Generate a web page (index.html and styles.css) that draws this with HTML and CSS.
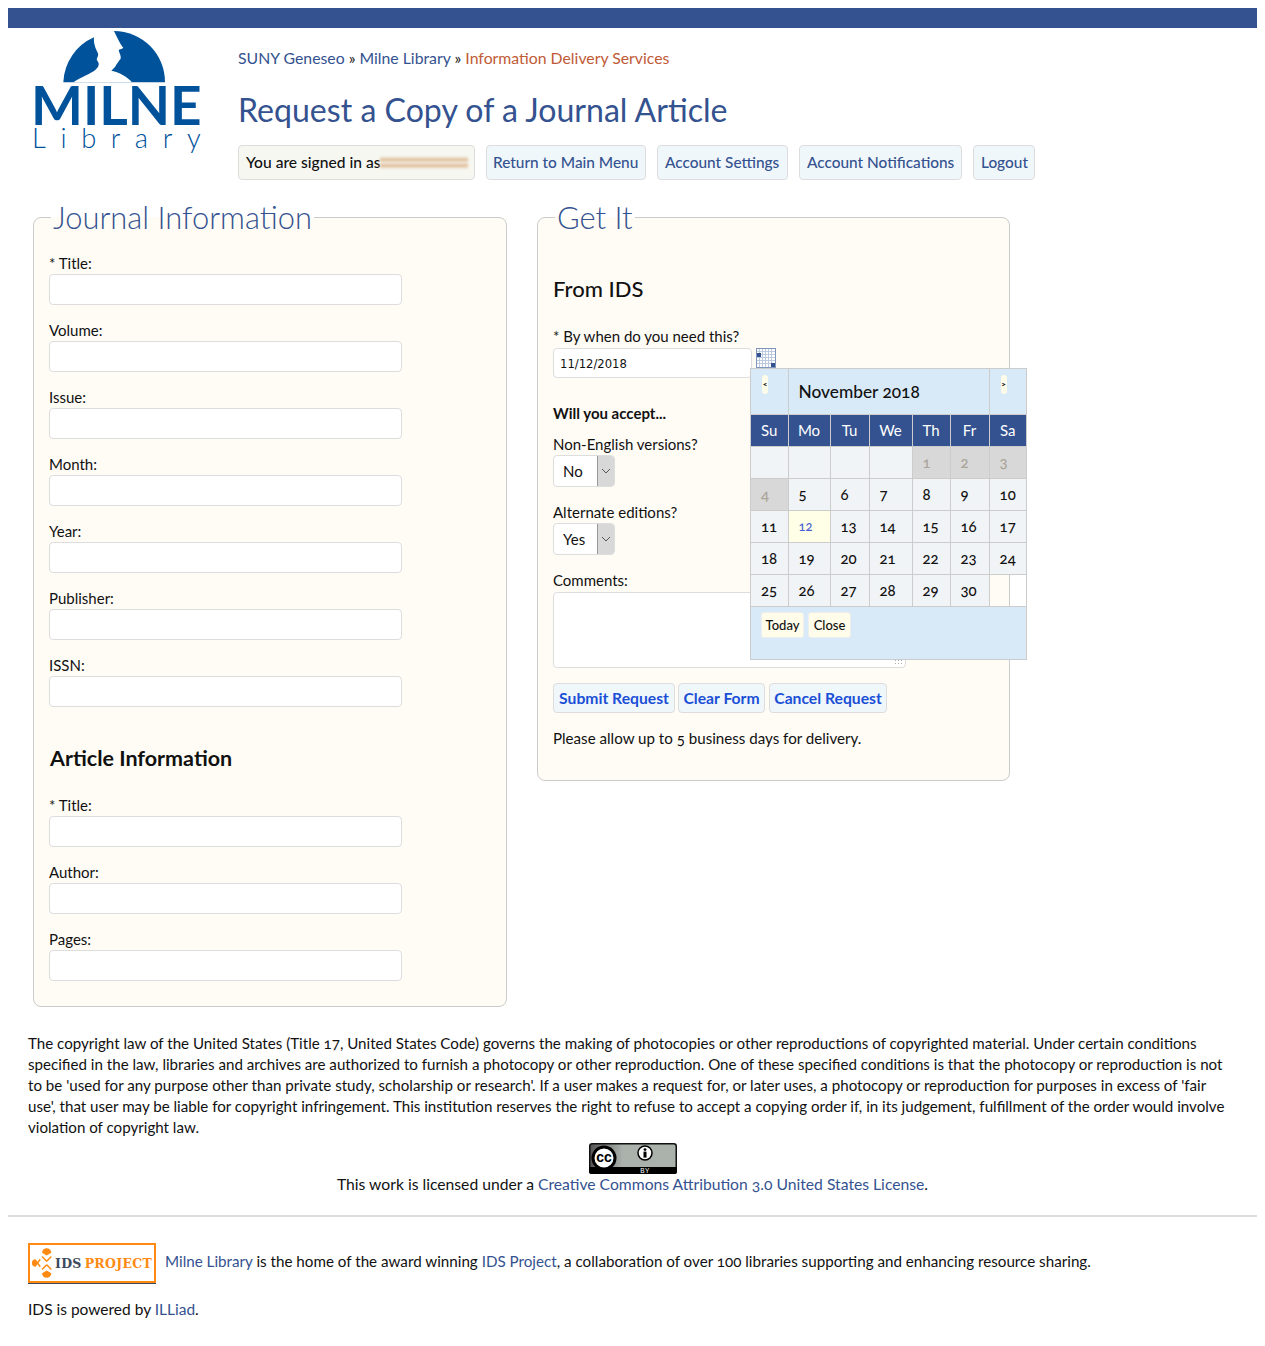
FILE: index.html
```html
<!DOCTYPE html>
<html lang="en">
<head>
<meta charset="utf-8">
<title>Request a Copy of a Journal Article</title>
<link rel="stylesheet" href="styles.css">
</head>
<body>
<div class="topbar"></div>
<header class="masthead">
  <svg class="logo" viewBox="36 24 510 384" role="img" aria-label="Milne Library">
    <path class="logo-fill" d="M130 187 A153 153 0 0 1 222 52 L282 33 A153 153 0 0 1 435 187 Z"/>
    <path class="logo-cut" d="M222 52 C228 40 262 34 282 33 C290 50 298 68 310 84 C304 88 298 88 296 90 C298 100 304 108 302 116 C296 122 294 128 290 132 C286 142 280 146 274 152 C300 158 322 170 336 187 L160 187 C186 170 210 162 226 150 C236 140 240 132 232 122 C226 116 240 108 232 96 C226 84 220 68 222 52 Z"/>
    <text class="logo-milne" x="33" y="315" textLength="512" lengthAdjust="spacingAndGlyphs">MILNE</text>
    <text class="logo-lib" x="36" y="383" textLength="506" lengthAdjust="spacing">Library</text>
  </svg>
  <div class="headcol">
    <nav class="crumbs"><a href="#">SUNY Geneseo</a> » <a href="#">Milne Library</a> » <a href="#" class="crumb-here">Information Delivery Services</a></nav>
    <h1>Request a Copy of a Journal Article</h1>
    <div class="navrow">
      <span class="pill pill-user">You are signed in as<span class="blur"></span></span>
      <a class="pill pill-return" href="#">Return to Main Menu</a>
      <a class="pill pill-settings" href="#">Account Settings</a>
      <a class="pill pill-notes" href="#">Account Notifications</a>
      <a class="pill pill-logout" href="#">Logout</a>
    </div>
  </div>
</header>

<main class="columns">
  <fieldset class="panel panel-left">
    <legend>Journal Information</legend>
    <div class="field"><label>* Title:</label><input class="wide" type="text"></div>
    <div class="field"><label>Volume:</label><input class="wide" type="text"></div>
    <div class="field"><label>Issue:</label><input class="wide" type="text"></div>
    <div class="field"><label>Month:</label><input class="wide" type="text"></div>
    <div class="field"><label>Year:</label><input class="wide" type="text"></div>
    <div class="field"><label>Publisher:</label><input class="wide" type="text"></div>
    <div class="field"><label>ISSN:</label><input class="wide" type="text"></div>
    <h2 class="article-head">Article Information</h2>
    <div class="field"><label>* Title:</label><input class="wide" type="text"></div>
    <div class="field"><label>Author:</label><input class="wide" type="text"></div>
    <div class="field"><label>Pages:</label><input class="wide" type="text"></div>
  </fieldset>

  <fieldset class="panel panel-right">
    <legend>Get It</legend>
    <h2 class="ids-head">From IDS</h2>
    <div class="field datefield">
      <label>* By when do you need this?</label>
      <div class="dateline">
        <input class="date" type="text" value="11/12/2018">
        <svg class="calicon" viewBox="0 0 20 20" aria-hidden="true">
          <rect x="0.5" y="0.5" width="19" height="19" class="cal-bg"/>
          <path class="cal-grid" d="M0 3.5H20M0 6.5H20M0 9.5H20M0 12.5H20M0 15.5H20M3.5 0V20M6.5 0V20M9.5 0V20M12.5 0V20M15.5 0V20"/>
          <rect x="0.5" y="0.5" width="19" height="19" class="cal-edge"/>
          <rect x="1" y="5" width="4" height="4" class="cal-dot"/>
          <rect x="15" y="15" width="4" height="4" class="cal-dot"/>
        </svg>
      </div>
      <div class="datepicker">
        <table>
          <colgroup><col class="c1"><col class="c2"><col class="c3"><col class="c4"><col class="c5"><col class="c6"><col class="c7"></colgroup>
          <thead>
            <tr class="dp-title">
              <th><button class="dp-arrow" type="button">&lt;</button></th>
              <th colspan="5" class="dp-month">November 2018</th>
              <th><button class="dp-arrow" type="button">&gt;</button></th>
            </tr>
            <tr class="dp-days"><th>Su</th><th>Mo</th><th>Tu</th><th>We</th><th>Th</th><th>Fr</th><th>Sa</th></tr>
          </thead>
          <tbody>
            <tr><td></td><td></td><td></td><td></td><td class="off">1</td><td class="off">2</td><td class="off">3</td></tr>
            <tr><td class="off">4</td><td>5</td><td>6</td><td>7</td><td>8</td><td>9</td><td>10</td></tr>
            <tr><td>11</td><td class="today">12</td><td>13</td><td>14</td><td>15</td><td>16</td><td>17</td></tr>
            <tr><td>18</td><td>19</td><td>20</td><td>21</td><td>22</td><td>23</td><td>24</td></tr>
            <tr><td>25</td><td>26</td><td>27</td><td>28</td><td>29</td><td>30</td><td class="empty"></td></tr>
          </tbody>
        </table>
        <div class="dp-foot"><button type="button">Today</button><button type="button">Close</button></div>
      </div>
    </div>
    <h3 class="accept">Will you accept...</h3>
    <div class="field">
      <label>Non-English versions?</label>
      <div class="selectbox"><span>No</span><i class="arrow"><svg viewBox="0 0 10 6"><path d="M1 1l4 4 4-4"/></svg></i></div>
    </div>
    <div class="field">
      <label>Alternate editions?</label>
      <div class="selectbox"><span>Yes</span><i class="arrow"><svg viewBox="0 0 10 6"><path d="M1 1l4 4 4-4"/></svg></i></div>
    </div>
    <div class="field comments">
      <label>Comments:</label>
      <textarea></textarea>
      <span class="grip"></span>
    </div>
    <div class="actions">
      <button type="button" class="act act-submit">Submit Request</button>
      <button type="button" class="act act-clear">Clear Form</button>
      <button type="button" class="act act-cancel">Cancel Request</button>
    </div>
    <p class="allow">Please allow up to 5 business days for delivery.</p>
  </fieldset>
</main>

<section class="legal">
  <p>The copyright law of the United States (Title 17, United States Code) governs the making of photocopies or other reproductions of copyrighted material. Under certain conditions<br>specified in the law, libraries and archives are authorized to furnish a photocopy or other reproduction. One of these specified conditions is that the photocopy or reproduction is not<br>to be 'used for any purpose other than private study, scholarship or research'. If a user makes a request for, or later uses, a photocopy or reproduction for purposes in excess of 'fair<br>use', that user may be liable for copyright infringement. This institution reserves the right to refuse to accept a copying order if, in its judgement, fulfillment of the order would involve<br>violation of copyright law.</p>
</section>
<div class="license">
  <svg class="ccbadge" viewBox="0 0 88 31" role="img" aria-label="CC BY">
    <defs>
      <linearGradient id="ccfade" x1="0" x2="1" y1="0" y2="0">
        <stop offset="0" stop-color="#555"/>
        <stop offset="0.38" stop-color="#aab2ab"/>
      </linearGradient>
    </defs>
    <rect x="0.75" y="0.75" width="86.5" height="29.5" rx="2.5" class="cc-bg"/>
    <path d="M0 24H88V28.5A2.5 2.5 0 0 1 85.500 31H2.500A2.500 2.500 0 0 1 0 28.500Z" class="cc-strip"/>
    <circle cx="15" cy="15" r="11" class="cc-ring"/>
    <text x="15" y="19" class="cc-cc">cc</text>
    <circle cx="56" cy="10" r="7" class="cc-person-ring"/>
    <circle cx="56" cy="6.6" r="1.4" class="cc-dark"/>
    <rect x="54.5" y="8.6" width="3" height="6" class="cc-dark"/>
    <text x="56" y="30" class="cc-by">BY</text>
  </svg>
  <p>This work is licensed under a <a href="#">Creative Commons Attribution 3.0 United States License</a>.</p>
</div>
<hr class="rule">
<footer class="foot">
  <div class="idsline">
    <div class="idslogo">
      <svg class="idsmark" viewBox="0 0 26 34" aria-hidden="true">
        <path class="ids-x" d="M12 10l5 5 M22 10l-5 5M12 24l5-5M22 24l-5-5M10 13l-3 4 3 4"/>
        <path class="ids-dot" d="M17 1a5 5 0 0 1 5 5l-5 3-5-3a5 5 0 0 1 5-5z"/>
        <path class="ids-dot" d="M17 33a5 5 0 0 0 5-5l-5-3-5 3a5 5 0 0 0 5 5z"/>
        <path class="ids-dot" d="M1 17a4 4 0 0 1 4-4l3 4-3 4a4 4 0 0 1-4-4z"/>
      </svg>
      <span class="ids-a">IDS</span><span class="ids-b">PROJECT</span>
    </div>
    <p class="idstext"><a href="#">Milne Library</a> is the home of the award winning <a href="#">IDS Project</a>, a collaboration of over 100 libraries supporting and enhancing resource sharing.</p>
  </div>
  <p class="powered">IDS is powered by <a href="#">ILLiad</a>.</p>
</footer>
</body>
</html>
```
FILE: styles.css
```css
* { box-sizing: border-box; }
html, body { background: #fff; }
body {
  margin: 8px;
  height: 1330px;
  font-family: Lato, "Open Sans", sans-serif;
  font-size: 15.13px;
  line-height: 21px;
  color: #111;
  font-feature-settings: "onum" 1;
}
a { color: #34528f; text-decoration: none; }
p { margin: 0; }

.topbar { height: 20px; background: #34528f; }

.masthead { display: flex; height: 172px; }
.logo { width: 170px; height: 128px; margin-left: 24px; flex: none; }
.logo-fill { fill: #00529b; }
.logo-cut { fill: #fff; }
.logo-milne { font-family: Lato, sans-serif; font-weight: 700; font-size: 160px; fill: #00529b; }
.logo-lib { font-family: Lato, sans-serif; font-weight: 300; font-size: 82px; fill: #00529b; }

.headcol { margin-left: 36px; padding-top: 19px; }
.crumbs { font-size: 15.8px; line-height: 22px; }
.crumb-here { color: #bf5a36; }
h1 {
  margin: 21px 0 0;
  font-size: 32.1px;
  line-height: 40px;
  font-weight: 400;
  color: #34528f;
}
.navrow { display: flex; gap: 11px; margin-top: 15px; }
.pill {
  display: flex;
  align-items: center;
  height: 35px;
  padding: 0 6px;
  border: 1px solid #ddd;
  border-radius: 4px;
  background: #f0f7fb;
  font-size: 15.4px;
  font-weight: 500;
  white-space: nowrap;
}
.pill-user { width: 237px; background: #f6f7f1; color: #111; padding-left: 7px; font-size: 15.6px; }
.pill-return { width: 160px; }
.pill-settings { width: 131px; padding-left: 7px; }
.pill-notes { width: 163px; padding-left: 7px; }
.pill-logout { width: 62px; padding-left: 7px; }
.blur {
  flex: 1;
  height: 12px;
  background: repeating-linear-gradient(180deg, #e8d8c4 0 2px, #e3bd95 2px 4px, #efe6da 4px 6px);
  filter: blur(1px);
}

.columns { display: flex; align-items: flex-start; margin: -2px 0 0 25px; gap: 30px; }
.panel {
  position: relative;
  margin: 0;
  min-width: 0;
  padding: 17px 15px 10px;
  border: 1px solid #ccc;
  border-radius: 8px;
  background: #fffcf6;
}
.panel-left { width: 474px; height: 809px; }
.panel-right { width: 473px; height: 583px; }
legend {
  padding: 2px 2px 0;
  margin-left: 2px;
  font-size: 30.9px;
  line-height: 36px;
  font-weight: 300;
  color: #34528f;
}
.field { margin-bottom: 15px; }
label { display: block; height: 21px; font-size: 15px; line-height: 21px; }
input, textarea {
  display: block;
  border: 1px solid #ddd;
  border-radius: 4px;
  background: #fff;
  margin: 0;
  padding: 0 6px;
  font-family: "DejaVu Sans", sans-serif;
}
.wide { width: 353px; height: 31px; }
.article-head { margin: 0; height: 73px; padding-top: 21px; padding-left: 1px; font-size: 21.5px; line-height: 30px; font-weight: 700; color: #111; }

.ids-head { margin: 0; padding-top: 21px; height: 74px; font-size: 22px; line-height: 30px; font-weight: 500; }
.datefield { position: relative; margin-bottom: 0; }
.datefield label { line-height: 19px; }
.dateline { display: flex; align-items: flex-start; gap: 4px; }
.date { width: 199px; height: 30px; padding-top: 2px; font-size: 11.6px; color: #111; }
.calicon { width: 20px; height: 20px; flex: none; }
.cal-bg { fill: #fff; }
.cal-edge { fill: none; stroke: #8296bd; }
.cal-grid { stroke: #bccadf; stroke-width: 1; fill: none; }
.cal-dot { fill: #34528f; }

.datepicker {
  position: absolute;
  top: 41px;
  left: 197px;
  width: 277px;
  height: 292px;
  border: 1px solid #ccc;
  z-index: 2;
}
.datepicker table {
  width: 275px;
  border-collapse: collapse;
  table-layout: fixed;
}
.c1 { width: 37px; }
.c2 { width: 42px; }
.c3 { width: 39px; }
.c4 { width: 43px; }
.c5 { width: 38px; }
.c6 { width: 39px; }
.c7 { width: 37px; }
.datepicker th, .datepicker td { border: 1px solid #ccc; padding: 0; }
.datepicker tr > :first-child { border-left: 0; }
.datepicker tr > :last-child { border-right: 0; }
.dp-title th { height: 45px; background: #d8e9f7; border-top: 0; text-align: left; vertical-align: top; }
.datepicker .dp-month { padding: 12px 0 0 10px; font-size: 17.3px; line-height: 22px; font-weight: 500; }
.dp-arrow {
  display: block;
  width: 6px;
  height: 19px;
  margin: 6px 0 0 11px;
  padding: 0;
  border: 0;
  border-radius: 3px;
  background: #fffdea;
  font: 900 8px/17px Lato, sans-serif;
  color: #111;
  overflow: visible;
}
.dp-days th { height: 32px; background: #34528f; color: #fff; font-size: 15px; font-weight: 400; text-align: center; }
.datepicker td { height: 32px; background: #f1f4f7; padding-left: 10px; font-size: 15px; font-weight: 500; }
.datepicker td.off { background: #d8d8d8; color: #aaa49a; }
.datepicker td.today { background: #ffffe8; color: #4a5fd0; font-size: 13px; }
.datepicker td.empty { background: transparent; }
.dp-foot { display: flex; gap: 4px; height: 52px; padding: 5px 10px; background: #d8e9f7; align-items: flex-start; }
.dp-foot button {
  width: 43px;
  height: 26px;
  padding: 0;
  border: 1px solid #eee;
  border-radius: 3px;
  background: #fffdea;
  font: 500 13px/24px Lato, sans-serif;
  color: #111;
}

.accept { margin: 0; padding-top: 25px; height: 56px; font-size: 15px; line-height: 21px; font-weight: 700; }
.selectbox {
  display: flex;
  width: 62px;
  height: 32px;
  border: 1px solid #ddd;
  border-radius: 4px;
  background: #fff;
  font-size: 15px;
  line-height: 30px;
}
.selectbox span { flex: 1; padding-left: 9px; }
.arrow { display: flex; align-items: center; justify-content: center; width: 17px; background: #d8d8d8; border-left: 1px solid #999; border-radius: 0 3px 3px 0; }
.arrow svg { width: 10px; height: 6px; fill: none; stroke: #555; stroke-width: 1; }
.comments { position: relative; }
.comments label { height: 22px; }
textarea { width: 353px; height: 76px; resize: none; }
.grip {
  position: absolute;
  right: 91px;
  bottom: 3px;
  width: 9px;
  height: 6px;
  background: radial-gradient(circle, #aaa 0 1px, transparent 1px) 0 0 / 3px 3px;
}

.actions { display: flex; gap: 3px; }
.act {
  height: 30px;
  padding: 0;
  border: 1px solid #ddd;
  border-radius: 4px;
  background: #f0f7fb;
  font: 700 15.7px/28px Lato, sans-serif;
  color: #1a4fd6;
}
.act-submit { width: 122px; }
.act-clear { width: 87px; }
.act-cancel { width: 118px; margin-left: 1px; }
.allow { margin-top: 15px; }

.legal { margin: 26px 20px 0; }
.license { text-align: center; margin-top: 5px; font-size: 15.7px; line-height: 20px; }
.ccbadge { display: block; width: 88px; height: 31px; margin: 0 auto; }
.cc-bg { fill: url(#ccfade); stroke: #111; stroke-width: 1.5; }
.cc-strip { fill: #000; }
.cc-ring { fill: #fff; stroke: #000; stroke-width: 3; }
.cc-cc { font: 700 14px "Liberation Sans", sans-serif; text-anchor: middle; fill: #000; }
.cc-person-ring { fill: #fff; stroke: #000; stroke-width: 1.5; }
.cc-dark { fill: #000; }
.cc-by { font: 6.5px "Liberation Sans", sans-serif; text-anchor: middle; fill: #fff; letter-spacing: .4px; }
.rule { height: 2px; margin: 21px 0 0; border: 0; background: #ddd; }

.foot { padding: 26px 20px 0; }
.idsline { display: flex; align-items: center; gap: 9px; }
.idslogo {
  display: flex;
  align-items: center;
  flex: none;
  width: 128px;
  height: 40px;
  padding-left: 1px;
  border: 2px solid #ff8a12;
  box-shadow: 0 1px 0 #3c4a5c;
  white-space: nowrap;
}
.idsmark { width: 24px; height: 32px; flex: none; }
.ids-x { fill: none; stroke: #ff8a12; stroke-width: 1.6; }
.ids-dot { fill: #ff8a12; }
.ids-a, .ids-b { font: 700 12.5px "DejaVu Serif", serif; letter-spacing: .3px; }
.ids-a { color: #3c4a5c; }
.ids-b { color: #ff8a12; margin-left: 3px; }
.idstext { font-size: 15.2px; position: relative; top: -2px; }
.powered { margin-top: 16px; font-size: 15.5px; }
```
